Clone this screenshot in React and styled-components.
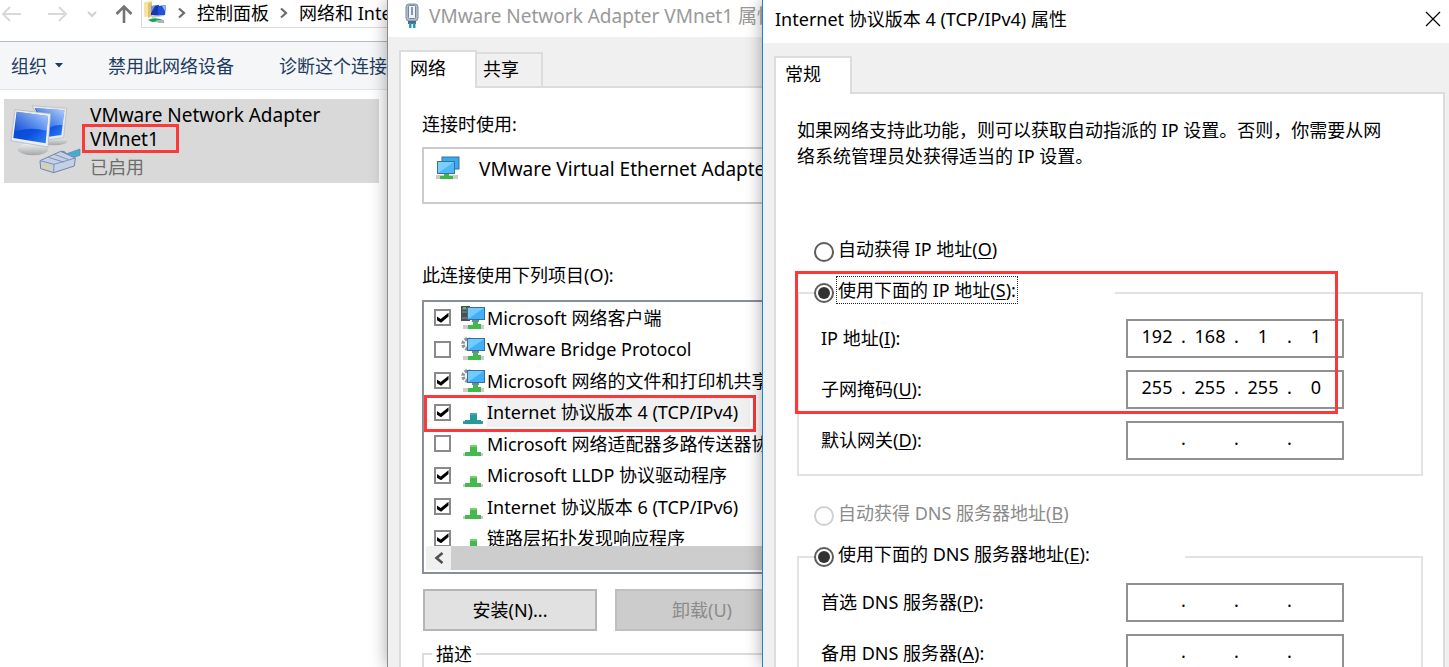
import styled, { createGlobalStyle } from "styled-components"

const bindings = [
    { id: "client", name: "Microsoft 网络客户端", icon: "server", checked: true },
    { id: "bridge", name: "VMware Bridge Protocol", icon: "gear", checked: false },
    { id: "share", name: "Microsoft 网络的文件和打印机共享", icon: "gear", checked: true },
    { id: "ipv4", name: "Internet 协议版本 4 (TCP/IPv4)", icon: "protocol", checked: true, selected: true },
    { id: "mux", name: "Microsoft 网络适配器多路传送器协议", icon: "protocol", checked: false },
    { id: "lldp", name: "Microsoft LLDP 协议驱动程序", icon: "protocol", checked: true },
    { id: "ipv6", name: "Internet 协议版本 6 (TCP/IPv6)", icon: "protocol", checked: true },
    { id: "lltd", name: "链路层拓扑发现响应程序", icon: "protocol", checked: true },
]

export default function App(){
    return(
        <>
            <GlobalStyle />
            <Desktop lang="zh-CN">
                <Explorer />
                <AdapterWindow />
                <ProtocolWindow />
            </Desktop>
        </>
    )
}

function Explorer(){
    return(
        <ExplorerPane>
            <NavBar>
                <NavButton aria-label="后退" $w={22}>
                    <svg width="22" height="18" viewBox="0 0 22 18" fill="none" stroke="#d9d9d9" strokeWidth="2"><path d="M21 9H3M10 2L3 9l7 7" /></svg>
                </NavButton>
                <NavButton aria-label="前进" $w={22}>
                    <svg width="22" height="18" viewBox="0 0 22 18" fill="none" stroke="#d9d9d9" strokeWidth="2"><path d="M1 9h18M12 2l7 7-7 7" /></svg>
                </NavButton>
                <NavButton aria-label="最近位置" $w={10}>
                    <svg width="10" height="8" viewBox="0 0 10 8" fill="none" stroke="#d0d0d0" strokeWidth="2"><path d="M1 2l4 4 4-4" /></svg>
                </NavButton>
                <NavButton aria-label="上移" $w={18}>
                    <svg width="18" height="20" viewBox="0 0 18 20" fill="none" stroke="#737373" strokeWidth="2.6"><path d="M9 19V3M1.500 10L9 2.500l7.500 7.500" /></svg>
                </NavButton>
                <AddressBar>
                    <FolderIcon />
                    <Chevron />
                    <Crumb href="#panel">控制面板</Crumb>
                    <Chevron />
                    <Crumb href="#network">网络和 Internet</Crumb>
                </AddressBar>
            </NavBar>
            <CommandBar>
                <Command>组织<Caret /></Command>
                <Command>禁用此网络设备</Command>
                <Command>诊断这个连接</Command>
            </CommandBar>
            <Connection>
                <ComputersIcon />
                <ConnectionText>
                    <ConnectionLine>VMware Network Adapter</ConnectionLine>
                    <ConnectionLine><Marked>VMnet1<RedBox $top={-3} $left={-8} $right={-20} $bottom={-2} /></Marked></ConnectionLine>
                    <ConnectionStatus>已启用</ConnectionStatus>
                </ConnectionText>
            </Connection>
        </ExplorerPane>
    )
}

function AdapterWindow(){
    return(
        <AdapterPane>
            <TitleBar $h={37} $muted>
                <PlugIcon />
                <Title $size={19}>VMware Network Adapter VMnet1 属性</Title>
            </TitleBar>
            <WindowBody $x={11} $y={13}>
                <Tabs role="tablist">
                    <Tab role="tab" aria-selected="true" $active>网络</Tab>
                    <Tab role="tab" aria-selected="false">共享</Tab>
                </Tabs>
                <AdapterPanel>
                    <Caption>连接时使用:</Caption>
                    <AdapterName>
                        <AdapterIcon />
                        VMware Virtual Ethernet Adapter for VMnet1
                    </AdapterName>
                    <Caption>此连接使用下列项目(O):</Caption>
                    <BindingBox>
                        <BindingView>
                            <BindingList>
                                {bindings.map((item) => (
                                    <BindingRow key={item.id}>
                                        <Checkbox type="checkbox" id={item.id} defaultChecked={item.checked} />
                                        <BindingIcon kind={item.icon} selected={item.selected} />
                                        <BindingLabel htmlFor={item.id} $selected={item.selected}>{item.name}</BindingLabel>
                                        {item.selected && <RedBox $top={-2} $left={0} $right={6} $bottom={-4} />}
                                    </BindingRow>
                                ))}
                            </BindingList>
                        </BindingView>
                        <ScrollBar>
                            <ScrollArrow aria-label="向左滚动">
                                <svg width="10" height="12" viewBox="0 0 10 12" fill="none" stroke="#505050" strokeWidth="2.600"><path d="M8.500 1L2.500 6l6 5" /></svg>
                            </ScrollArrow>
                            <ScrollThumb />
                        </ScrollBar>
                    </BindingBox>
                    <Actions>
                        <PushButton>安装(N)...</PushButton>
                        <PushButton disabled>卸载(U)</PushButton>
                    </Actions>
                    <Description>
                        <legend>描述</legend>
                    </Description>
                </AdapterPanel>
            </WindowBody>
        </AdapterPane>
    )
}

function ProtocolWindow(){
    return(
        <ProtocolPane>
            <TitleBar $h={43}>
                <Title $size={18}>Internet 协议版本 4 (TCP/IPv4) 属性</Title>
                <CloseButton aria-label="关闭">
                    <svg width="16" height="16" viewBox="0 0 16 16" stroke="#000" strokeWidth="1.200"><path d="M1 1l14 14M15 1L1 15" /></svg>
                </CloseButton>
            </TitleBar>
            <WindowBody $x={11} $y={13}>
                <Tabs role="tablist">
                    <Tab role="tab" aria-selected="true" $active>常规</Tab>
                </Tabs>
                <ProtocolPanel>
                    <Intro>如果网络支持此功能，则可以获取自动指派的 IP 设置。否则，你需要从网络系统管理员处获得适当的 IP 设置。</Intro>
                    <RadioRow $top={69}>
                        <Radio type="radio" name="ip" id="ip-auto" />
                        <RadioLabel htmlFor="ip-auto">自动获得 IP 地址(<u>O</u>)</RadioLabel>
                    </RadioRow>
                    <Group>
                        <Fieldset>
                            <Legend $w={301}>
                                <Radio type="radio" name="ip" id="ip-manual" defaultChecked />
                                <RadioLabel htmlFor="ip-manual" $focus>使用下面的 IP 地址(<u>S</u>):</RadioLabel>
                            </Legend>
                            <AddressField id="address" value={["192", "168", "1", "1"]}>IP 地址(<u>I</u>):</AddressField>
                            <AddressField id="mask" value={["255", "255", "255", "0"]}>子网掩码(<u>U</u>):</AddressField>
                            <AddressField id="gateway">默认网关(<u>D</u>):</AddressField>
                        </Fieldset>
                        <RedBox $top={-8} $left={-2} $right={85} $bottom={62} />
                    </Group>
                    <RadioRow $top={26}>
                        <Radio type="radio" name="dns" id="dns-auto" disabled />
                        <RadioLabel htmlFor="dns-auto" $disabled>自动获得 DNS 服务器地址(<u>B</u>)</RadioLabel>
                    </RadioRow>
                    <Group>
                        <Fieldset>
                            <Legend $w={371}>
                                <Radio type="radio" name="dns" id="dns-manual" defaultChecked />
                                <RadioLabel htmlFor="dns-manual">使用下面的 DNS 服务器地址(<u>E</u>):</RadioLabel>
                            </Legend>
                            <AddressField id="dns1">首选 DNS 服务器(<u>P</u>):</AddressField>
                            <AddressField id="dns2">备用 DNS 服务器(<u>A</u>):</AddressField>
                        </Fieldset>
                    </Group>
                </ProtocolPanel>
            </WindowBody>
        </ProtocolPane>
    )
}

function AddressField({ id, value = ["", "", "", ""], children }){
    return(
        <FieldRow>
            <label htmlFor={id + "-0"}>{children}</label>
            <AddressBox>
                {value.map((part, i) => (
                    <Octet key={i}>
                        {i > 0 && <Dot>.</Dot>}
                        <OctetInput id={id + "-" + i} aria-label={i > 0 ? "第 " + (i + 1) + " 段" : undefined} defaultValue={part} maxLength={3} />
                    </Octet>
                ))}
            </AddressBox>
        </FieldRow>
    )
}

function Chevron(){
    return <svg width="10" height="12" viewBox="0 0 10 12" fill="none" stroke="#6b6b6b" strokeWidth="2.200"><path d="M2 1.500L7 6l-5 4.500" /></svg>
}

function Caret(){
    return <svg width="8" height="5" viewBox="0 0 8 5" fill="#1e3c5f"><path d="M0 0h8L4 4.500z" /></svg>
}

function FolderIcon(){
    return(
        <svg width="24" height="24" viewBox="0 0 24 24">
            <path d="M1 1l8-1v15l-8 1z" fill="#f6e3a6" />
            <path d="M5 2l4-1v14l-4 2z" fill="#e5c266" />
            <path d="M8 5l8-1v11l-8-1z" fill="#1638b5" />
            <path d="M8 5h4l-4 7z" fill="#6d97ea" />
            <path d="M15 5l8-1-1 10-7 1z" fill="#2450d8" />
            <path d="M19 5l4-1-1 6z" fill="#9bbcf4" />
            <path d="M8 15l13-1v1l-12 2z" fill="#c3c9d4" />
            <path d="M5 19q5-3 12-1l3 1v1l-11 1z" fill="#17a548" />
            <path d="M13 19h8v3h-6z" fill="#a3b8b4" />
        </svg>
    )
}

function ComputersIcon(){
    return(
        <svg width="82" height="84" viewBox="12 0 246 252">
            <defs>
                <linearGradient id="screen" x1="0" y1="0" x2="1" y2="1">
                    <stop offset="0" stopColor="#0a3fc6" />
                    <stop offset=".6" stopColor="#0d4fe0" />
                    <stop offset="1" stopColor="#2f86f6" />
                </linearGradient>
                <linearGradient id="glare" x1="0" y1="1" x2="1" y2="0">
                    <stop offset="0" stopColor="#8fc0ff" stopOpacity=".1" />
                    <stop offset="1" stopColor="#cfe6ff" stopOpacity=".9" />
                </linearGradient>
                <linearGradient id="stand" x1="0" y1="0" x2="0" y2="1">
                    <stop offset="0" stopColor="#f4f4f4" />
                    <stop offset="1" stopColor="#a3a6aa" />
                </linearGradient>
            </defs>
            <ellipse cx="162" cy="126" rx="40" ry="13" fill="url(#stand)" />
            <path d="M96 20l104 8-9 88-44 6z" fill="#e6e8eb" stroke="#b2b5b9" strokeWidth="2" />
            <path d="M104 27l89 7-9 74-38 5z" fill="url(#screen)" />
            <path d="M104 27l89 7-5 44q-24-2-38 8z" fill="url(#glare)" />
            <path d="M80 124h42v26H80z" fill="#aeb1b5" />
            <ellipse cx="99" cy="150" rx="46" ry="19" fill="url(#stand)" />
            <path d="M45 32l107 12-8 100-111-19z" fill="#eceef0" stroke="#abafb4" strokeWidth="2" />
            <path d="M50 38l94 13-7 82-97-16z" fill="url(#screen)" />
            <path d="M50 38l94 13-4 44q-50-12-95 2z" fill="url(#glare)" />
            <path d="M176 170q10-24 24-6l40-14v19l-30 10-13-8-15 12z" fill="#43acd0" stroke="#5d83a0" strokeWidth="2" />
            <path d="M120 185l62-28 44 20-3 24-62 20-39-12z" fill="#c4d0e5" stroke="#7484a7" strokeWidth="3" />
            <path d="M120 185l42 11 64-19M162 196l-1 24M145 175l46 14M163 166l43 16" fill="none" stroke="#8191b4" strokeWidth="3" />
            <path d="M128 193l6 2v14l-6-2zM138 195l6 2v14l-6-2zM148 197l6 2v14l-6-2z" fill="#e0d489" />
        </svg>
    )
}

function PlugIcon(){
    return(
        <svg width="14" height="26" viewBox="0 0 14 26">
            <rect x="1" y="1" width="12" height="17" rx="3" fill="#aebccc" stroke="#8291a3" />
            <rect x="3.500" y="2.500" width="7" height="13" rx="1" fill="#edf2f7" stroke="#74859a" />
            <rect x="6" y="4" width="2" height="8" fill="#8796a8" />
            <path d="M3 18h8v3H3z" fill="#566779" />
            <path d="M4 20h2.500v5H4zM8 20h2.500v5H8z" fill="#1aa0cf" />
        </svg>
    )
}

function AdapterIcon(){
    return(
        <svg width="24" height="24" viewBox="0 0 24 24">
            <rect x="6" y="1" width="17" height="12" fill="#39a9f0" stroke="#36729a" />
            <rect x="1.500" y="5.500" width="17" height="12" fill="#4db8fc" stroke="#36729a" />
            <path d="M2 17V6h16z" fill="#7dcdfd" />
            <path d="M0 19h22v4H0z" fill="#cbcbcb" />
            <path d="M8 18h5v2h4v3H4v-3h4z" fill="#3fb64c" />
        </svg>
    )
}

function BindingIcon({ kind, selected }){
    if (kind === "protocol") {
        return(
            <svg width="24" height="24" viewBox="0 0 24 24">
                <path d="M2 21h20v3H2z" fill={selected ? "#4a8fc6" : "#c8c8c8"} />
                <path d="M9 13h7v7h4v4H4v-4h5z" fill={selected ? "#28999a" : "#45b94d"} />
                <path d="M9 13h7v2H9z" fill={selected ? "#3cabab" : "#75d36e"} />
            </svg>
        )
    }
    return(
        <svg width="24" height="24" viewBox="0 0 24 24">
            {kind === "server" ? (
                <>
                    <path d="M0 0h9v15H0z" fill="#4a4f53" />
                    <path d="M1 3h6M1 6h6M1 12h6" stroke="#8c9297" />
                    <path d="M2 1h3v2H2z" fill="#56c34a" />
                </>
            ) : (
                <circle cx="7" cy="7" r="5" fill="#f5f5f5" stroke="#8d959b" strokeWidth="3.500" strokeDasharray="2.600 1.300" />
            )}
            <rect x="6.500" y="1.500" width="17" height="12" fill="#42b0f8" stroke="#376f96" />
            <path d="M7 13V2h16z" fill="#74c9fd" />
            <path d="M2 19h21v4H2z" fill="#cdcdcd" />
            <path d="M12 14h5v4h3v5H7v-4h5z" fill="#3fba4b" />
            <path d="M11 14h7v2h-7z" fill="#77878c" />
        </svg>
    )
}

const GlobalStyle = createGlobalStyle`
    * {
        box-sizing: border-box;
    }
    body {
        margin: 0;
        background-color: #fff;
        color: #000;
        font-family: "Noto Sans", "Noto Sans CJK SC", sans-serif;
        font-size: 18px;
        line-height: 26px;
    }
    button, input {
        font: inherit;
        color: inherit;
    }
    u {
        text-underline-offset: 2px;
    }
`

const Desktop = styled.main`
    display: grid;
    grid-template-columns: 387fr 375fr 687fr;
    grid-template-rows: minmax(0, 1fr);
    height: 100vh;
    overflow: hidden;
    white-space: nowrap;
`

const Pane = styled.section`
    display: flex;
    flex-direction: column;
    min-width: 0;
    overflow: hidden;
`

const ExplorerPane = styled(Pane)`
    background-color: #fff;
`

const AdapterPane = styled(Pane)`
    position: relative;
    background-color: #f0f0f0;
    border-left: 1px solid #8c8c8c;
    box-shadow: 0 0 16px rgba(0, 0, 0, 0.35);
`

const ProtocolPane = styled(AdapterPane)`
    border-left: 1px solid #1883d7;
`

const RedBox = styled.span`
    position: absolute;
    top: ${(p) => p.$top}px;
    right: ${(p) => p.$right}px;
    bottom: ${(p) => p.$bottom}px;
    left: ${(p) => p.$left}px;
    border: 3px solid #fc3838;
    pointer-events: none;
`

const NavBar = styled.nav`
    display: flex;
    align-items: flex-start;
    height: 42px;
    border-bottom: 1px solid #b9b9b9;
`

const NavButton = styled.button`
    display: flex;
    align-items: center;
    flex-shrink: 0;
    width: ${(p) => p.$w}px;
    height: 28px;
    margin-right: 18px;
    padding: 0;
    border: 0;
    background: none;

    &:first-child {
        margin-right: 25px;
    }
`

const AddressBar = styled.div`
    display: flex;
    align-items: center;
    flex: 1;
    gap: 10px;
    height: 28px;
    margin-left: -10px;
    padding: 0 0 2px 1px;
    border: 1px solid #d9d9d9;
    border-width: 0 0 1px 1px;

    svg {
        flex-shrink: 0;
    }
`

const Crumb = styled.a`
    color: #000;
    text-decoration: none;
`

const CommandBar = styled.div`
    display: flex;
    flex-shrink: 0;
    gap: 45px;
    height: 48px;
    padding-left: 11px;
    background-color: #f5f6f8;
    border-bottom: 1px solid #e3e5e8;
`

const Command = styled.button`
    display: flex;
    align-items: center;
    gap: 8px;
    flex-shrink: 0;
    padding: 0;
    border: 0;
    background: none;
    color: #1e3c5f;
`

const Connection = styled.article`
    display: flex;
    height: 84px;
    margin: 9px 8px 0 4px;
    background-color: #d9d9d9;
`

const ConnectionText = styled.div`
    padding: 4px;
`

const ConnectionLine = styled.div`
    font-size: 19px;
    line-height: 24px;
`

const ConnectionStatus = styled(ConnectionLine)`
    margin-top: 4px;
    font-size: 18px;
    color: #6d6d6d;
`

const Marked = styled.span`
    display: inline-block;
    position: relative;
`

const TitleBar = styled.header`
    display: flex;
    align-items: center;
    flex-shrink: 0;
    height: ${(p) => p.$h}px;
    padding: 0 8px 6px ${(p) => (p.$muted ? 17 : 12)}px;
    gap: 10px;
    background-color: #fff;
    color: ${(p) => (p.$muted ? "#999" : "#000")};

    svg {
        flex-shrink: 0;
    }
`

const Title = styled.h1`
    flex: 1;
    min-width: 0;
    margin: 0;
    font-size: ${(p) => p.$size}px;
    font-weight: 400;
`

const CloseButton = styled.button`
    display: flex;
    padding: 0;
    border: 0;
    background: none;
`

const WindowBody = styled.div`
    display: flex;
    flex: 1;
    flex-direction: column;
    min-height: 0;
    padding: ${(p) => p.$y}px 0 0 ${(p) => p.$x}px;
`

const Tabs = styled.div`
    display: flex;
    flex-shrink: 0;
    align-items: flex-end;
`

const Tab = styled.button`
    position: relative;
    height: ${(p) => (p.$active ? 38 : 34)}px;
    width: ${(p) => (p.$active ? 78 : 66)}px;
    margin-bottom: ${(p) => (p.$active ? -2 : 0)}px;
    padding: ${(p) => (p.$active ? "0 9px 5px" : "0 6px 2px")};
    border: 2px solid #dcdcdc;
    border-width: ${(p) => (p.$active ? "2px 2px 0 2px" : "2px 2px 0 0")};
    background-color: ${(p) => (p.$active ? "#fff" : "#f0f0f0")};
    text-align: left;
    z-index: ${(p) => (p.$active ? 1 : 0)};
`

const Panel = styled.div`
    flex: 1;
    min-height: 0;
    overflow: hidden;
    background-color: #fff;
    border: 2px solid #dcdcdc;
    border-bottom: 0;
`

const AdapterPanel = styled(Panel)`
    padding: 23px 0 0 21px;
    border-right: 0;
`

const Caption = styled.p`
    margin: 0;
`

const AdapterName = styled.div`
    display: flex;
    gap: 19px;
    height: 57px;
    margin: 10px 0 58px;
    padding: 7px 12px;
    border: 2px solid #ccc;
    border-right: 0;
    font-size: 19px;

    svg {
        flex-shrink: 0;
    }
`

const BindingBox = styled.div`
    margin-top: 12px;
    border: 2px solid #898e97;
    border-right: 0;
`

const BindingView = styled.div`
    height: 244px;
    overflow: hidden;
`

const BindingList = styled.ul`
    display: grid;
    grid-template-columns: minmax(0, 1fr);
    grid-auto-rows: 1fr;
    height: 252px;
    margin: 0;
    padding: 0;
    list-style: none;
`

const BindingRow = styled.li`
    display: flex;
    align-items: center;
    position: relative;
    padding-left: 10px;

    svg {
        flex-shrink: 0;
        margin: 0 2px 0 10px;
    }
`

const Checkbox = styled.input`
    display: grid;
    place-items: center;
    flex-shrink: 0;
    appearance: none;
    width: 17px;
    height: 17px;
    margin: 0;
    border: 2px solid #8a8a8a;
    background-color: #fff;

    &:checked::before {
        content: "";
        width: 12px;
        height: 10px;
        background-color: #000;
        clip-path: polygon(0 35%, 35% 62%, 100% 0, 100% 38%, 38% 100%, 0 72%);
    }
`

const BindingLabel = styled.label`
    padding-right: 12px;
    line-height: 30px;
    background-color: ${(p) => (p.$selected ? "#f0f0f0" : "transparent")};
`

const ScrollBar = styled.div`
    display: flex;
    height: 26px;
    padding: 0 0 2px 2px;
`

const ScrollArrow = styled.button`
    display: grid;
    place-items: center;
    width: 25px;
    padding: 0;
    border: 0;
    background-color: #f0f0f0;
`

const ScrollThumb = styled.div`
    flex: 1;
    background-color: #cdcdcd;
`

const Actions = styled.div`
    display: flex;
    gap: 18px;
    margin: 15px 0 10px 1px;
`

const PushButton = styled.button`
    flex-shrink: 0;
    width: 174px;
    height: 42px;
    padding: 0;
    border: 2px solid #b5b5b5;
    background-color: #e1e1e1;

    &:disabled {
        border-color: #bfbfbf;
        background-color: #ccc;
        color: #8b8b8b;
    }
`

const Description = styled.fieldset`
    height: 60px;
    margin: 0;
    padding: 0 8px;
    border: 2px solid #dcdcdc;
    border-right: 0;

    legend {
        padding: 0 4px;
    }
`

const ProtocolPanel = styled(Panel)`
    margin-right: 4px;
    padding: 23px 20px 0 21px;
`

const Intro = styled.p`
    margin: 0;
    padding-right: 24px;
    white-space: normal;
`

const RadioRow = styled.div`
    display: flex;
    align-items: center;
    height: 28px;
    margin: ${(p) => p.$top}px 0 13px 17px;
`

const Radio = styled.input`
    display: grid;
    place-items: center;
    flex-shrink: 0;
    appearance: none;
    width: 20px;
    height: 20px;
    margin: 0 3px 0 0;
    border: 2px solid #5c5c5c;
    border-radius: 50%;
    background-color: #fff;

    &:checked::before {
        content: "";
        width: 12px;
        height: 12px;
        border-radius: 50%;
        background-color: #333;
    }

    &:disabled {
        border-color: #d0d0d0;
    }
`

const RadioLabel = styled.label`
    margin-bottom: 6px;
    padding: 0 1px;
    color: ${(p) => (p.$disabled ? "#8b8b8b" : "#000")};
    outline: ${(p) => (p.$focus ? "1px dotted #222" : "none")};
`

const Group = styled.div`
    position: relative;
`

const Fieldset = styled.fieldset`
    display: flex;
    flex-direction: column;
    gap: 12px;
    margin: 0;
    padding: 12px 77px 14px 22px;
    border: 2px solid #e2e2e2;
`

const Legend = styled.legend`
    display: flex;
    align-items: center;
    width: ${(p) => p.$w}px;
    height: 28px;
    margin-left: -7px;
    padding: 0;
`

const FieldRow = styled.div`
    display: flex;
    align-items: center;
    justify-content: space-between;

    label {
        padding-bottom: 2px;
    }
`

const AddressBox = styled.div`
    display: flex;
    width: 218px;
    height: 39px;
    padding: 2px 0 0 8px;
    border: 2px solid #919191;
`

const Octet = styled.span`
    display: flex;
`

const Dot = styled.span`
    width: 11px;
    text-align: center;
`

const OctetInput = styled.input`
    width: 42px;
    height: 26px;
    padding: 0;
    border: 0;
    background: none;
    text-align: center;
    outline: none;
`
